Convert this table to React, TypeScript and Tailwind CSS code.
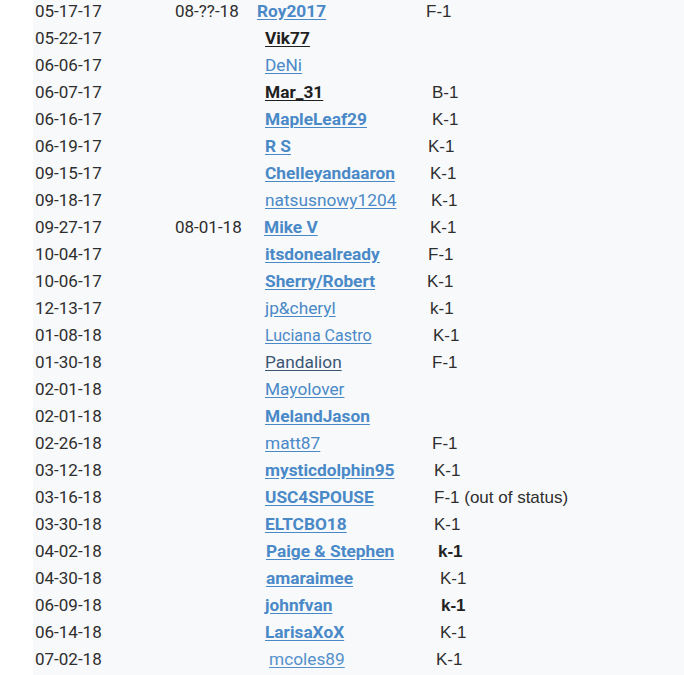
const LINK = "text-[#4a89c8]";

type Row = {
  date: string;
  until?: string;
  name: string;
  nameCls: string;
  namePad: string;
  status?: string;
  statusCls?: string;
  statusPad?: string;
};

const rows: Row[] = [
  { date: "05-17-17", until: "08-??-18", name: "Roy2017", nameCls: `${LINK} font-bold`, namePad: "pl-0", status: "F-1", statusPad: "pl-[6px]" },
  { date: "05-22-17", name: "Vik77", nameCls: "text-[#1f1f1f] font-bold", namePad: "pl-[8px]" },
  { date: "06-06-17", name: "DeNi", nameCls: LINK, namePad: "pl-[8px]" },
  { date: "06-07-17", name: "Mar_31", nameCls: "text-[#1f1f1f] font-bold", namePad: "pl-[8px]", status: "B-1", statusPad: "pl-[12px]" },
  { date: "06-16-17", name: "MapleLeaf29", nameCls: `${LINK} font-bold`, namePad: "pl-[8px]", status: "K-1", statusPad: "pl-[12px]" },
  { date: "06-19-17", name: "R S", nameCls: `${LINK} font-bold`, namePad: "pl-[8px]", status: "K-1", statusPad: "pl-[8px]" },
  { date: "09-15-17", name: "Chelleyandaaron", nameCls: `${LINK} font-bold`, namePad: "pl-[8px]", status: "K-1", statusPad: "pl-[10px]" },
  { date: "09-18-17", name: "natsusnowy1204", nameCls: LINK, namePad: "pl-[8px]", status: "K-1", statusPad: "pl-[11px]" },
  { date: "09-27-17", until: "08-01-18", name: "Mike V", nameCls: `${LINK} font-bold`, namePad: "pl-[7px]", status: "K-1", statusPad: "pl-[10px]" },
  { date: "10-04-17", name: "itsdonealready", nameCls: `${LINK} font-bold`, namePad: "pl-[8px]", status: "F-1", statusPad: "pl-[8px]" },
  { date: "10-06-17", name: "Sherry/Robert", nameCls: `${LINK} font-bold`, namePad: "pl-[8px]", status: "K-1", statusPad: "pl-[7px]" },
  { date: "12-13-17", name: "jp&cheryl", nameCls: LINK, namePad: "pl-[8px]", status: "k-1", statusPad: "pl-[10px]" },
  { date: "01-08-18", name: "Luciana Castro", nameCls: `${LINK} text-[16px]`, namePad: "pl-[8px]", status: "K-1", statusPad: "pl-[13px]" },
  { date: "01-30-18", name: "Pandalion", nameCls: "text-[#3b5675]", namePad: "pl-[8px]", status: "F-1", statusPad: "pl-[12px]" },
  { date: "02-01-18", name: "Mayolover", nameCls: LINK, namePad: "pl-[8px]" },
  { date: "02-01-18", name: "MelandJason", nameCls: `${LINK} font-bold`, namePad: "pl-[8px]" },
  { date: "02-26-18", name: "matt87", nameCls: LINK, namePad: "pl-[8px]", status: "F-1", statusPad: "pl-[12px]" },
  { date: "03-12-18", name: "mysticdolphin95", nameCls: `${LINK} font-bold`, namePad: "pl-[8px]", status: "K-1", statusPad: "pl-[14px]" },
  { date: "03-16-18", name: "USC4SPOUSE", nameCls: `${LINK} font-bold`, namePad: "pl-[8px]", status: "F-1 (out of status)", statusPad: "pl-[14px]" },
  { date: "03-30-18", name: "ELTCBO18", nameCls: `${LINK} font-bold`, namePad: "pl-[8px]", status: "K-1", statusPad: "pl-[14px]" },
  { date: "04-02-18", name: "Paige & Stephen", nameCls: `${LINK} font-bold`, namePad: "pl-[9px]", status: "k-1", statusCls: "font-bold text-[#222]", statusPad: "pl-[18px]" },
  { date: "04-30-18", name: "amaraimee", nameCls: `${LINK} font-bold`, namePad: "pl-[9px]", status: "K-1", statusPad: "pl-[20px]" },
  { date: "06-09-18", name: "johnfvan", nameCls: `${LINK} font-bold`, namePad: "pl-[8px]", status: "k-1", statusCls: "font-bold text-[#222]", statusPad: "pl-[21px]" },
  { date: "06-14-18", name: "LarisaXoX", nameCls: `${LINK} font-bold`, namePad: "pl-[8px]", status: "K-1", statusPad: "pl-[20px]" },
  { date: "07-02-18", name: "mcoles89", nameCls: "text-[#5590cc]", namePad: "pl-[12px]", status: "K-1", statusPad: "pl-[16px]" },
];

function App() {
  return (
    <div className="flex min-h-[675px] w-[684px] overflow-hidden bg-white font-['Roboto',sans-serif] text-[17px] text-[#2e2e2e]">
      <div className="w-[33px] shrink-0 bg-white" />
      <div className="flex-1 bg-[#f8f9fa] pl-[2px]">
        <div className="-mt-[2px]">
          {rows.map((r, i) => (
            <div key={i} className="flex h-[27px] leading-[27px] whitespace-nowrap">
              <div className="w-[140px] shrink-0">{r.date}</div>
              <div className="w-[82px] shrink-0">{r.until}</div>
              <div className={`w-[163px] shrink-0 text-[17.3px] ${r.namePad}`}>
                <a href="#" className={`underline underline-offset-2 ${r.nameCls}`}>
                  {r.name}
                </a>
              </div>
              <div className={`font-['Liberation_Sans',Arial,sans-serif] ${r.statusPad} ${r.statusCls ?? ""}`}>
                {r.status}
              </div>
            </div>
          ))}
        </div>
      </div>
    </div>
  );
}

export default App;
